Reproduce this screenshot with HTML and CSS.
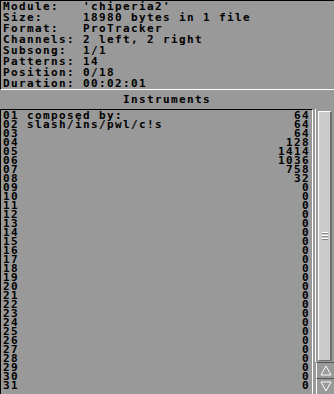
FILE: index.html
```html
<!DOCTYPE html>
<html lang="en">
<head>
  <meta charset="UTF-8">
  <title>Module info</title>
  <link rel="stylesheet" href="styles.css">
</head>
<body>
  <div class="window">
    <div class="info">
      <div class="line"><span class="key">Module:</span><span>'chiperia2'</span></div>
      <div class="line"><span class="key">Size:</span><span>18980 bytes in 1 file</span></div>
      <div class="line"><span class="key">Format:</span><span>ProTracker</span></div>
      <div class="line"><span class="key">Channels:</span><span>2 left, 2 right</span></div>
      <div class="line"><span class="key">Subsong:</span><span>1/1</span></div>
      <div class="line"><span class="key">Patterns:</span><span>14</span></div>
      <div class="line"><span class="key">Position:</span><span>0/18</span></div>
      <div class="line"><span class="key">Duration:</span><span>00:02:01</span></div>
    </div>

    <div class="title">Instruments</div>

    <div class="list-area">
      <div class="list" id="list"></div>
      <div class="scrollbar">
        <div class="track">
          <div class="knob">
            <div class="grip"></div>
            <div class="grip"></div>
            <div class="grip"></div>
          </div>
        </div>
        <div class="arrow">
          <svg width="12" height="11" viewBox="0 0 12 11"><path d="M6 1 L11 10 L1 10 Z" fill="none" stroke="#fff" stroke-width="1"/></svg>
        </div>
        <div class="arrow">
          <svg width="12" height="11" viewBox="0 0 12 11"><path d="M1 1 L11 1 L6 10 Z" fill="none" stroke="#fff" stroke-width="1"/></svg>
        </div>
      </div>
    </div>
  </div>

<script>
// instrumentos: nome e tamanho
const instruments = [
  ['composed by:', 64],
  ['slash/ins/pwl/c!s', 64],
  ['', 64],
  ['', 128],
  ['', 1414],
  ['', 1036],
  ['', 758],
  ['', 32]
];

const list = document.getElementById('list');
for (let i = 0; i < 31; i++) {
  const item = instruments[i] || ['', 0];
  const row = document.createElement('div');
  row.className = 'row';
  const num = String(i + 1).padStart(2, '0');
  row.innerHTML = '<span class="num">' + num + '</span><span class="name">' + item[0] + '</span><span class="size">' + item[1] + '</span>';
  list.appendChild(row);
}
</script>
</body>
</html>
```

FILE: styles.css
```css
body {
  margin: 0;
  padding: 0;
  background-color: #999999;
  font-family: "DejaVu Sans Mono", "Liberation Mono", monospace;
  font-weight: bold;
  font-size: 11px;
  letter-spacing: 1.38px;
  color: #000;
}

.window {
  width: 334px;
  height: 394px;
  overflow: hidden;
}

.info {
  border-top: 1px solid #000;
  border-left: 1px solid #000;
  border-bottom: 1px solid #fff;
  padding-left: 2px;
  height: 88px;
}

.line {
  display: grid;
  grid-template-columns: 80px 1fr;
  height: 11px;
  line-height: 11px;
  white-space: pre;
}

.title {
  height: 19px;
  line-height: 19px;
  text-align: center;
}

.list-area {
  display: flex;
  height: 285px;
}

.list {
  width: 306px;
  border-top: 1px solid #000;
  border-left: 1px solid #000;
  border-right: 1px solid #fff;
  padding-left: 2px;
  padding-right: 3px;
  padding-top: 1px;
}

.row {
  display: grid;
  grid-template-columns: 24px 1fr auto;
  height: 9px;
  line-height: 9px;
  white-space: pre;
}

.size {
  margin-right: -1px;
}

/* barra de rolagem */
.scrollbar {
  width: 21px;
  display: flex;
  flex-direction: column;
}

.track {
  flex: 1;
  margin-left: 2px;
  border-left: 1px solid #fff;
  padding: 2px 2px 1px 2px;
  display: flex;
}

.knob {
  flex: 1;
  background-color: #cccccc;
  border-left: 1px solid #fff;
  border-top: 1px solid #fff;
  border-right: 2px solid #6e6e6e;
  border-bottom: 1px solid #6e6e6e;
  display: flex;
  flex-direction: column;
  justify-content: center;
  align-items: center;
  gap: 1px;
}

.grip {
  width: 6px;
  height: 1px;
  background-color: #fff;
  border-bottom: 1px solid #888;
}

.arrow {
  height: 15px;
  margin-left: 3px;
  border-top: 1px solid #555;
  border-left: 1px solid #fff;
  display: flex;
  align-items: center;
  justify-content: center;
}
```
